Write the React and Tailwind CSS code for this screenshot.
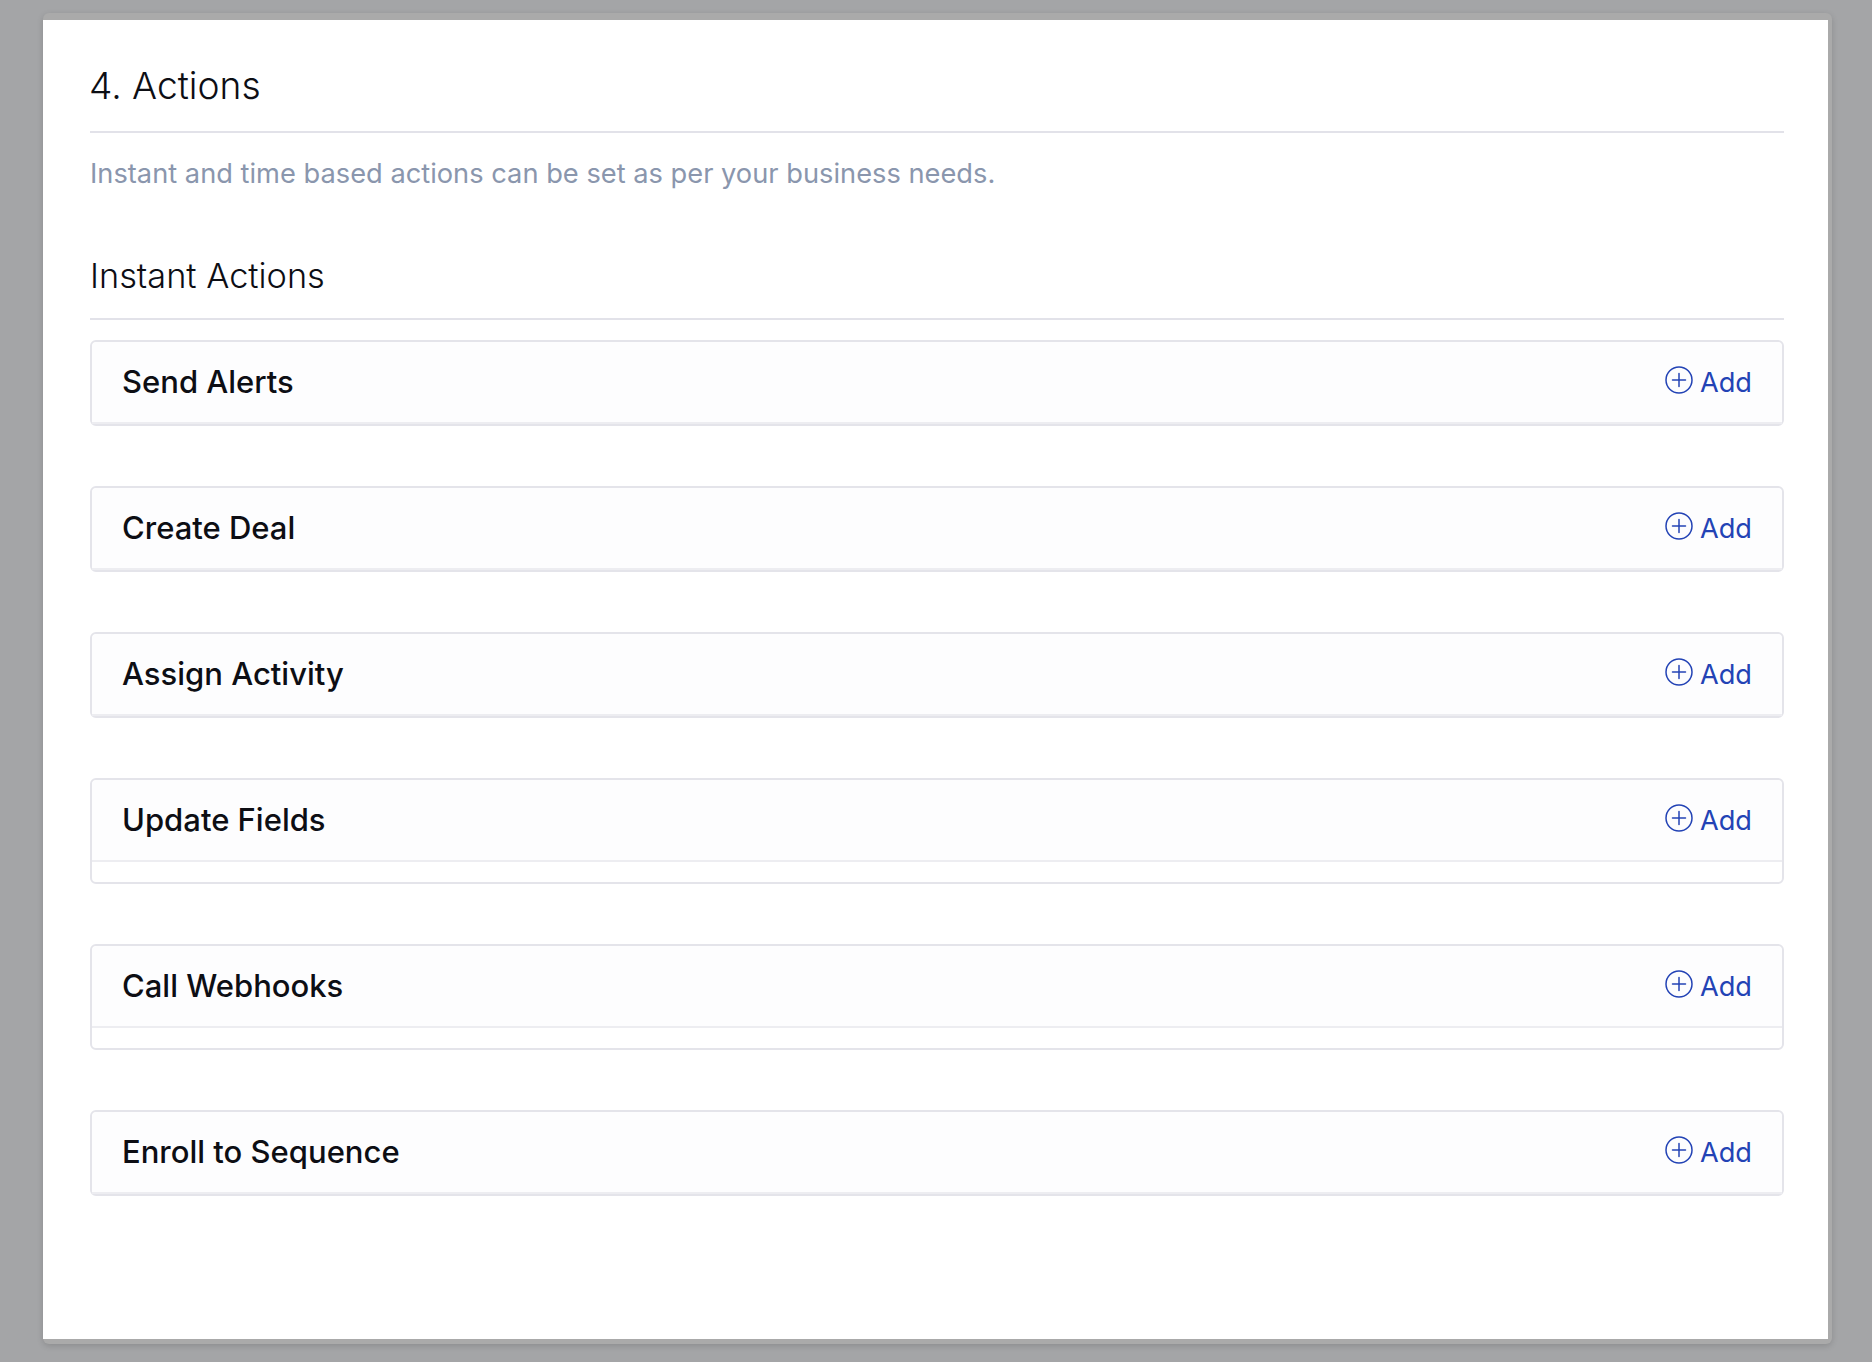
import React from "react";

const ACTIONS = [
  { name: "Send Alerts" },
  { name: "Create Deal" },
  { name: "Assign Activity" },
  { name: "Update Fields", hasBody: true },
  { name: "Call Webhooks", hasBody: true },
  { name: "Enroll to Sequence" },
];

const PlusCircle = () => (
  <svg className="h-[28px] w-[28px] -mt-[6px]" viewBox="0 0 28 28" fill="none" stroke="currentColor" strokeWidth="1.5" strokeLinecap="round">
    <circle cx="14" cy="14" r="13" />
    <path d="M14 7.5v13M7.5 14h13" />
  </svg>
);

const ActionCard = ({ name, hasBody }) => (
  <div className="rounded-[6px] border-2 border-[#e4e4ea] bg-white">
    <div className="flex h-[82px] items-center justify-between rounded-t-[5px] border-b-2 border-[#ededf1] bg-[#fdfdfe] px-[30px] pt-[2px]">
      <span className="-mt-[2px] text-[31px] font-medium text-[#0d0e14]">{name}</span>
      <button className="flex items-center gap-[7px] text-[27.2px] text-[#2343b5]">
        <PlusCircle />
        Add
      </button>
    </div>
    {hasBody && <div className="h-[20px]"></div>}
  </div>
);

const App = () => {
  return (
    <div className="h-[1362px] w-[1872px] overflow-hidden bg-[#a4a5a7] pl-[43px] pt-[13px] font-['Inter',sans-serif]">
      <div className="h-[1331px] w-[1789px] rounded-[6px] bg-[#aaaaaa] pr-[4px] pt-[7px] shadow-[0_2px_6px_rgba(0,0,0,0.15)]">
        <div className="h-[1319px] bg-white pl-[47px] pr-[44px]">
          <div className="flex h-[113px] items-center border-b-2 border-[#e2e2e9] pt-[21px]">
            <h2 className="-ml-[1px] text-[37.2px] font-light text-[#0d0e14]">4. Actions</h2>
          </div>
          <p className="mt-[23px] text-[27.25px] leading-[36px] text-[#8a96ad]">
            Instant and time based actions can be set as per your business needs.
          </p>
          <div className="mt-[64px] flex h-[64px] items-start border-b-2 border-[#e2e2e9]">
            <h3 className="text-[34.3px] leading-[40px] font-light text-[#0d0e14]">Instant Actions</h3>
          </div>
          <div className="mt-[20px] flex flex-col gap-[60px]">
            {ACTIONS.map((action) => (
              <ActionCard key={action.name} name={action.name} hasBody={action.hasBody} />
            ))}
          </div>
        </div>
      </div>
    </div>
  );
};

export default App;
